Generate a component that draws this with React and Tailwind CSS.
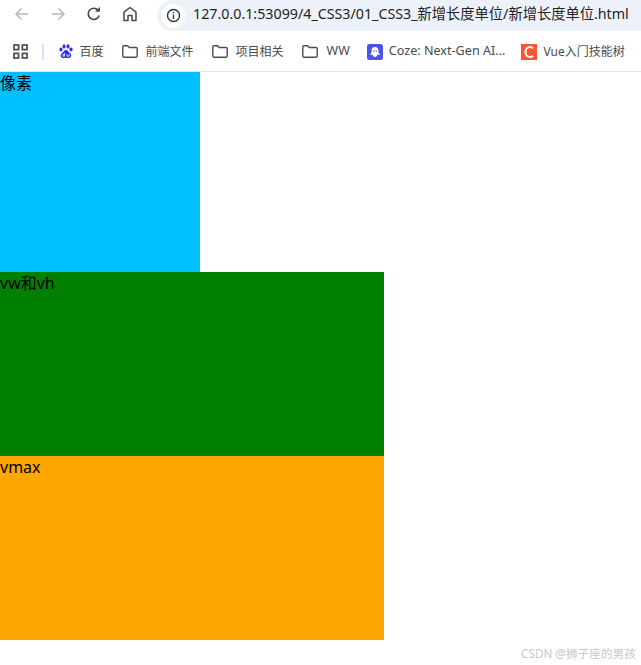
import React from "react";

const cjk = "font-['Noto_Sans','Noto_Sans_CJK_SC',sans-serif]";

function Folder() {
  return (
    <svg width="16" height="13" viewBox="0 0 16 13" fill="none" stroke="#4a4d51" strokeWidth="1.4" className="shrink-0">
      <path d="M0.8 1.9C0.8 1.2 1.3 0.8 1.9 0.8H5.6L7.3 2.5H14.1C14.7 2.5 15.2 3 15.2 3.6V11.1C15.2 11.7 14.7 12.2 14.1 12.2H1.9C1.3 12.2 0.8 11.7 0.8 11.1Z" strokeLinejoin="round" />
    </svg>
  );
}

function Bookmark({ icon, label, className, gap, size }) {
  return (
    <div className={`flex items-center shrink-0 ${gap || "gap-[8px]"} ${className || ""}`}>
      {icon}
      <span className={`${size || "text-[12px]"} leading-none text-[#474a4e] whitespace-nowrap`}>{label}</span>
    </div>
  );
}

export default function App() {
  return (
    <div className={`w-[641px] h-[665px] bg-white overflow-hidden flex flex-col text-black ${cjk}`}>
      <div className="h-[36px] flex shrink-0">
        <div className="w-[157px] flex items-start pt-[5px] pl-[13px] shrink-0">
          <svg width="18" height="18" viewBox="0 0 18 18" fill="none" stroke="#b4b6b8" strokeWidth="1.5" className="mr-[18px]">
            <path d="M15 9H3.5M8.5 3.5L3 9L8.5 14.5" />
          </svg>
          <svg width="18" height="18" viewBox="0 0 18 18" fill="none" stroke="#b4b6b8" strokeWidth="1.5" className="mr-[18px]">
            <path d="M3 9H14.5M9.5 3.5L15 9L9.5 14.5" />
          </svg>
          <svg width="18" height="18" viewBox="0 0 18 18" fill="none" stroke="#45484c" strokeWidth="1.6" className="mr-[18px]">
            <path d="M14.2 10.5A5.6 5.6 0 1 1 13 5" />
            <path d="M14.4 2.4V6.2H10.6" fill="#45484c" strokeWidth="1" />
          </svg>
          <svg width="18" height="18" viewBox="0 0 18 18" fill="none" stroke="#45484c" strokeWidth="1.5">
            <path d="M3 15.5V7.2L9 2.5L15 7.2V15.5H11V10.5H7V15.5Z" strokeLinejoin="round" />
          </svg>
        </div>
        <div className="flex-1 h-[31px] bg-[#edf2fa] rounded-l-[16px] flex items-center pl-[4px] min-w-0">
          <div className="w-[24px] h-[24px] rounded-full bg-white flex items-center justify-center shrink-0">
            <svg width="15" height="15" viewBox="0 0 15 15" fill="none" stroke="#303336" strokeWidth="1.4">
              <circle cx="7.5" cy="7.5" r="6" />
              <path d="M7.5 6.5V11M7.5 4V5.2" />
            </svg>
          </div>
          <span className="ml-[8px] mb-[2px] text-[14.25px] leading-none text-[#1f2124] whitespace-nowrap">127.0.0.1:53099/4_CSS3/01_CSS3_新增长度单位/新增长度单位.html</span>
        </div>
      </div>

      <div className="h-[36px] shrink-0 border-b border-[#e1e3e6] flex items-center pl-[13px] pb-[4px] overflow-hidden">
        <svg width="15" height="15" viewBox="0 0 15 15" fill="none" stroke="#4a4d51" strokeWidth="1.7" className="shrink-0">
          <rect x="1" y="1" width="4.6" height="4.6" />
          <rect x="9.4" y="1" width="4.6" height="4.6" />
          <rect x="1" y="9.4" width="4.6" height="4.6" />
          <rect x="9.4" y="9.4" width="4.6" height="4.6" />
        </svg>
        <div className="w-[1.5px] h-[16px] bg-[#d3e3fd] ml-[14px] mr-[15px] shrink-0" />
        <Bookmark
          label="百度"
          gap="gap-[7px]"
          icon={
            <svg width="14" height="15" viewBox="0 0 14 15" fill="#2932e1" className="shrink-0">
              <ellipse cx="2" cy="5.5" rx="1.6" ry="2.1" />
              <ellipse cx="5" cy="2.4" rx="1.5" ry="2.2" />
              <ellipse cx="9" cy="2.4" rx="1.5" ry="2.2" />
              <ellipse cx="12" cy="5.5" rx="1.6" ry="2.1" />
              <path d="M7 6C5 6 4.6 8 3 9.2C1.2 10.6 1.2 13.6 4 14C5.5 14.2 6 13.8 7 13.8C8 13.8 8.5 14.2 10 14C12.8 13.6 12.8 10.6 11 9.2C9.4 8 9 6 7 6Z" />
              <path d="M5.6 9V12.2H3.9V10.4H5.6M8.2 10.2V12.2H10.2V10.2" fill="none" stroke="white" strokeWidth="0.8" />
            </svg>
          }
          className="mr-[18px]"
        />
        <Bookmark label="前端文件" icon={<Folder />} className="mr-[18px]" />
        <Bookmark label="项目相关" icon={<Folder />} className="mr-[18px]" />
        <Bookmark label="WW" gap="gap-[9px]" size="text-[12.5px]" icon={<Folder />} className="mr-[17px]" />
        <Bookmark
          label="Coze: Next-Gen AI..."
          gap="gap-[6px]"
          size="text-[12.6px]"
          icon={
            <svg width="16" height="16" viewBox="0 0 16 16" className="shrink-0">
              <rect width="16" height="16" rx="2.5" fill="#4d53e8" />
              <path d="M8 3C5.6 3 4.6 4.8 4.6 6.6V8.6L3 10.4C4 11 4.8 10.8 5.4 10.6C5.8 12 6.8 13 8 13C9.2 13 10.2 12 10.6 10.6C11.2 10.8 12 11 13 10.4L11.4 8.6V6.6C11.4 4.8 10.4 3 8 3Z" fill="white" />
              <circle cx="6.8" cy="7" r="0.8" fill="#4d53e8" />
              <circle cx="9.2" cy="7" r="0.8" fill="#4d53e8" />
            </svg>
          }
          className="mr-[16px]"
        />
        <Bookmark
          label="Vue入门技能树"
          gap="gap-[6px]"
          icon={
            <svg width="16" height="16" viewBox="0 0 16 16" fill="none" className="shrink-0">
              <rect width="16" height="16" fill="#fc5531" />
              <path d="M12 4.3C11.2 3.5 10.2 3 9 3C6.4 3 4.5 5.1 4.5 8C4.5 10.9 6.4 13 9 13C10.2 13 11.2 12.5 12 11.7" stroke="white" strokeWidth="2" />
            </svg>
          }
        />
      </div>

      <div className="w-[200px] h-[200px] bg-[deepskyblue] text-base leading-[22px] shrink-0">像素</div>
      <div className="w-[384px] h-[184px] bg-[green] text-base leading-[22px] shrink-0">vw和vh</div>
      <div className="w-[384px] h-[184px] bg-[orange] text-base leading-[22px] shrink-0">vmax</div>

      <div className="flex-1 flex justify-end items-center pr-[5px] pt-[2px]">
        <span className="text-[11.7px] leading-none text-[#c8c8c8] whitespace-nowrap">CSDN @狮子座的男孩</span>
      </div>
    </div>
  );
}
